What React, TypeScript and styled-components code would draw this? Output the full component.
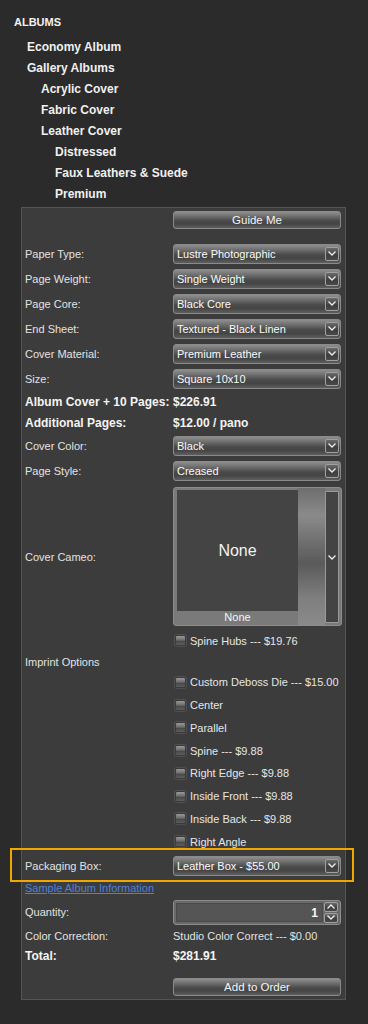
import React from "react";
import styled, { createGlobalStyle } from "styled-components";

const GlobalStyle = createGlobalStyle`
    body {
        margin: 0;
        background: #2b2b2b;
        font-family: "Liberation Sans", Arial, sans-serif;
    }
`;

const Page = styled.div`
    width: 368px;
    min-height: 1024px;
    background: #2b2b2b;
    overflow: hidden;
`;

const Nav = styled.ul`
    list-style: none;
    margin: 12px 0 2px;
    padding: 0;
`;

const NavTitle = styled.li`
    height: 21px;
    line-height: 21px;
    padding-left: 14px;
    margin-bottom: 4px;
    font-size: 11px;
    font-weight: bold;
    color: #f2f2f2;
`;

const NavItem = styled.li<{ level: number }>`
    height: 21px;
    line-height: 21px;
    padding-left: ${p => 13 + p.level * 14}px;
    font-size: 12px;
    font-weight: bold;
    color: #f0f0f0;
    cursor: pointer;
`;

const Panel = styled.div`
    box-sizing: border-box;
    width: 325px;
    margin-left: 21px;
    padding: 3px 4px 3px 3px;
    background: #3c3c3c;
    border: 1px solid #555;
`;

const Row = styled.div<{ h: number; mt?: number }>`
    position: relative;
    display: flex;
    align-items: center;
    height: ${p => p.h}px;
    margin-top: ${p => p.mt || 0}px;
`;

const Highlight = styled(Row)`
    &::after {
        content: '';
        position: absolute;
        left: -15px;
        right: -13px;
        top: -5px;
        bottom: -4px;
        border: 2px solid #f0a800;
        pointer-events: none;
    }
`;

const Label = styled.div<{ bold?: boolean }>`
    flex: 0 0 148px;
    font-size: ${p => p.bold ? 12 : 11}px;
    font-weight: ${p => p.bold ? 'bold' : 'normal'};
    color: ${p => p.bold ? '#f4f4f4' : '#e2e2e2'};
    white-space: nowrap;
`;

const Value = styled.div<{ bold?: boolean }>`
    flex: 0 0 168px;
    font-size: ${p => p.bold ? 12 : 11}px;
    font-weight: ${p => p.bold ? 'bold' : 'normal'};
    color: ${p => p.bold ? '#f4f4f4' : '#e2e2e2'};
    white-space: nowrap;
`;

const gloss = `linear-gradient(#8e8e8e 0%, #707070 25%, #4a4a4a 55%, #454545 75%, #5e5e5e 100%)`;

const Button = styled.div<{ h?: number }>`
    box-sizing: border-box;
    width: 168px;
    height: ${p => p.h || 18}px;
    border: 1px solid #8a8a8a;
    border-radius: 3px;
    background: ${gloss};
    color: #f4f4f4;
    font-size: 11.5px;
    display: flex;
    align-items: center;
    justify-content: center;
    cursor: pointer;
`;

const Select = styled.div`
    box-sizing: border-box;
    width: 168px;
    height: 20px;
    border: 1px solid #8a8a8a;
    border-radius: 3px;
    background: ${gloss};
    display: flex;
    align-items: center;
    padding: 0 1px 0 3px;
    color: #fafafa;
    font-size: 11px;
    cursor: pointer;
`;

const SelectText = styled.span`
    flex: 1;
    white-space: nowrap;
`;

const ArrowBox = styled.span<{ h?: number }>`
    box-sizing: border-box;
    width: 14px;
    height: ${p => p.h || 14}px;
    border: 1px solid #a0a0a0;
    border-radius: 2px;
    background: linear-gradient(#6a6a6a, #3e3e3e 60%, #4a4a4a);
    display: flex;
    align-items: center;
    justify-content: center;
`;

const Chevron: React.FC<{ up?: boolean }> = ({ up }) => (
    <svg width="10" height="7" viewBox="0 0 10 7">
        <polyline points={up ? "1.5,5.5 5,2 8.5,5.5" : "1.5,1.5 5,5 8.5,1.5"} fill="none" stroke="#eee" strokeWidth="1.3" />
    </svg>
);

const Cameo = styled.div`
    box-sizing: border-box;
    width: 169px;
    height: 139px;
    border: 1px solid #8c8c8c;
    border-radius: 3px;
    background: #7a7a7a;
    display: flex;
    padding: 2px 2px 2px 3px;
    gap: 0;
`;

const CameoMain = styled.div`
    display: flex;
    flex-direction: column;
    width: 122px;
`;

const CameoImage = styled.div`
    height: 121px;
    background: #444;
    color: #f2f2f2;
    font-size: 16px;
    display: flex;
    align-items: center;
    justify-content: center;
`;

const CameoCaption = styled.div`
    flex: 1;
    font-size: 11px;
    color: #f4f4f4;
    display: flex;
    align-items: center;
    justify-content: center;
`;

const CameoShade = styled.div`
    flex: 0 0 27px;
    margin-top: -2px;
    margin-bottom: -2px;
    background: linear-gradient(#6e6e6e 0%, #8a8a8a 20%, #5a5a5a 55%, #7e7e7e 80%, #8a8a8a 100%);
`;

const CameoScroll = styled.div`
    box-sizing: border-box;
    flex: 0 0 14px;
    margin-top: 1px;
    border: 1px solid #9a9a9a;
    border-radius: 1px;
    background: #444;
    display: flex;
    align-items: center;
    justify-content: center;
`;

const CheckItem = styled.label`
    display: flex;
    align-items: center;
    gap: 4px;
    padding-left: 2px;
    font-size: 11px;
    color: #e6e6e6;
    white-space: nowrap;
    cursor: pointer;
`;

const Box = styled.span`
    box-sizing: border-box;
    width: 11px;
    height: 11px;
    border: 1px solid #3a3a3a;
    border-radius: 2px;
    background: linear-gradient(#9a9a9a, #6c6c6c 45%, #4a4a4a 60%, #5e5e5e);
    box-shadow: 0 0 0 1px #505050;
`;

const Link = styled.a`
    font-size: 11px;
    color: #4f80d8;
    text-decoration: underline;
    cursor: pointer;
`;

const Spinner = styled.div`
    box-sizing: border-box;
    width: 169px;
    height: 25px;
    border: 1px solid #8c8c8c;
    border-radius: 3px;
    background: #6a6a6a;
    display: flex;
    align-items: center;
    padding: 2px;
    gap: 1px;
`;

const SpinInput = styled.div`
    flex: 1;
    height: 100%;
    background: #555;
    border: 1px solid #4a4a4a;
    box-sizing: border-box;
    text-align: right;
    padding-right: 4px;
    font-size: 12px;
    font-weight: bold;
    color: #fafafa;
    line-height: 19px;
`;

const SpinButtons = styled.div`
    display: flex;
    flex-direction: column;
    gap: 1px;
`;

const selects: [string, string][] = [
    ["Paper Type:", "Lustre Photographic"],
    ["Page Weight:", "Single Weight"],
    ["Page Core:", "Black Core"],
    ["End Sheet:", "Textured - Black Linen"],
    ["Cover Material:", "Premium Leather"],
    ["Size:", "Square 10x10"],
];

const imprints = [
    "Custom Deboss Die --- $15.00",
    "Center",
    "Parallel",
    "Spine --- $9.88",
    "Right Edge --- $9.88",
    "Inside Front --- $9.88",
    "Inside Back --- $9.88",
    "Right Angle",
];

const Dropdown: React.FC<{ value: string }> = ({ value }) => (
    <Select>
        <SelectText>{value}</SelectText>
        <ArrowBox><Chevron /></ArrowBox>
    </Select>
);

const App: React.FC = () => {
    return <Page>
        <GlobalStyle />
        <Nav>
            <NavTitle>ALBUMS</NavTitle>
            <NavItem level={1}>Economy Album</NavItem>
            <NavItem level={1}>Gallery Albums</NavItem>
            <NavItem level={2}>Acrylic Cover</NavItem>
            <NavItem level={2}>Fabric Cover</NavItem>
            <NavItem level={2}>Leather Cover</NavItem>
            <NavItem level={3}>Distressed</NavItem>
            <NavItem level={3}>Faux Leathers &amp; Suede</NavItem>
            <NavItem level={3}>Premium</NavItem>
        </Nav>
        <Panel>
            <Row h={18}>
                <Label />
                <Button>Guide Me</Button>
            </Row>
            {selects.map(([label, value], i) => (
                <Row h={25} mt={i === 0 ? 12 : 0} key={label}>
                    <Label>{label}</Label>
                    <Dropdown value={value} />
                </Row>
            ))}
            <Row h={21}>
                <Label bold>Album Cover + 10 Pages:</Label>
                <Value bold>$226.91</Value>
            </Row>
            <Row h={21}>
                <Label bold>Additional Pages:</Label>
                <Value bold>$12.00 / pano</Value>
            </Row>
            <Row h={25}>
                <Label>Cover Color:</Label>
                <Dropdown value="Black" />
            </Row>
            <Row h={25}>
                <Label>Page Style:</Label>
                <Dropdown value="Creased" />
            </Row>
            <Row h={139} mt={4}>
                <Label>Cover Cameo:</Label>
                <Cameo>
                    <CameoMain>
                        <CameoImage>None</CameoImage>
                        <CameoCaption>None</CameoCaption>
                    </CameoMain>
                    <CameoShade />
                    <CameoScroll><Chevron /></CameoScroll>
                </Cameo>
            </Row>
            <Row h={23} mt={3}>
                <Label />
                <CheckItem><Box />Spine Hubs --- $19.76</CheckItem>
            </Row>
            <Row h={19}>
                <Label>Imprint Options</Label>
            </Row>
            {imprints.map(text => (
                <Row h={22.75} key={text}>
                    <Label />
                    <CheckItem><Box />{text}</CheckItem>
                </Row>
            ))}
            <Highlight h={25}>
                <Label>Packaging Box:</Label>
                <Dropdown value="Leather Box - $55.00" />
            </Highlight>
            <Row h={20}>
                <Link>Sample Album Information</Link>
            </Row>
            <Row h={28}>
                <Label>Quantity:</Label>
                <Spinner>
                    <SpinInput>1</SpinInput>
                    <SpinButtons>
                        <ArrowBox h={10}><Chevron up /></ArrowBox>
                        <ArrowBox h={10}><Chevron /></ArrowBox>
                    </SpinButtons>
                </Spinner>
            </Row>
            <Row h={20}>
                <Label>Color Correction:</Label>
                <Value>Studio Color Correct --- $0.00</Value>
            </Row>
            <Row h={20}>
                <Label bold>Total:</Label>
                <Value bold>$281.91</Value>
            </Row>
            <Row h={18} mt={12}>
                <Label />
                <Button>Add to Order</Button>
            </Row>
        </Panel>
    </Page>;
};

export default App;
